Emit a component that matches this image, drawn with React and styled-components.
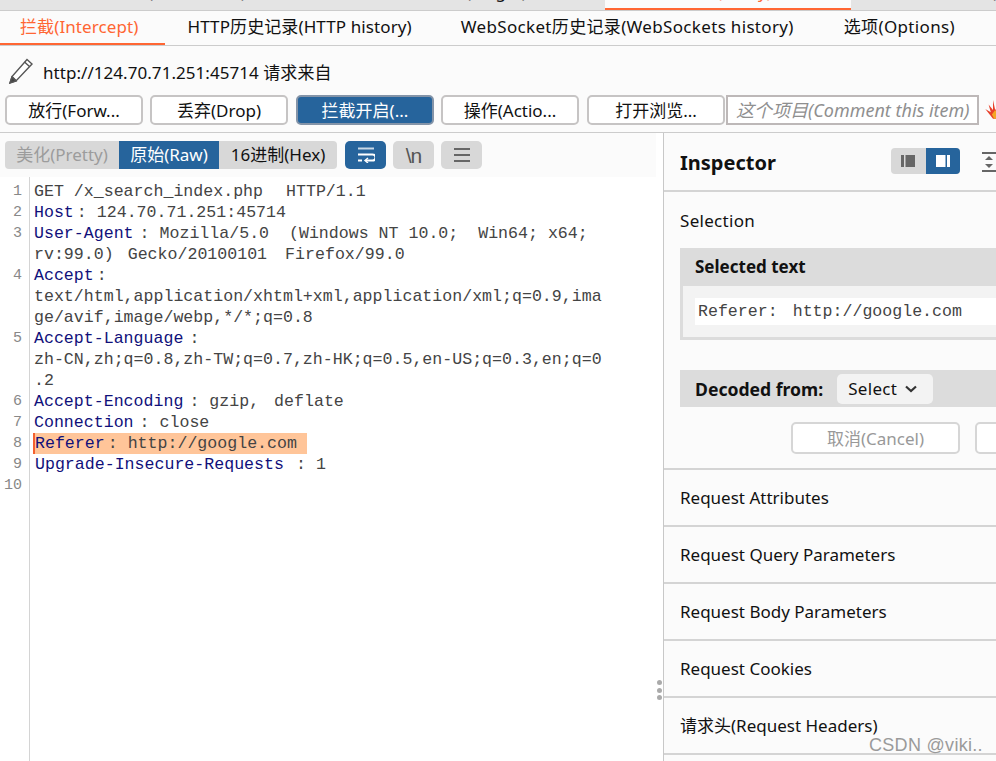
import React from 'react';
import styled, { createGlobalStyle } from 'styled-components';

const Global = createGlobalStyle`
  html, body { margin: 0; padding: 0; background: #fff; }
  body { width: 996px; height: 761px; overflow: hidden; font-family: "Noto Sans", "Noto Sans CJK SC", sans-serif; color: #111; }
  * { box-sizing: border-box; }
`;
const Page = styled.div`width:996px;height:761px;overflow:hidden;display:flex;flex-direction:column;position:relative;background:#fbfbfb;`;
const TopStrip = styled.div`display:flex;height:11px;flex:none;background:#e4e4e4;border-bottom:1px solid #ccc;overflow:hidden;`;
const TopTab = styled.div`
  flex:none;width:${p=>p.$w}px;padding-left:${p=>p.$pad}px;height:${p=>p.$active?'11px':'10px'};overflow:hidden;
  background:${p=>p.$active?'#fbfbfb':'transparent'};
  border-bottom:${p=>p.$active?'3px solid #ff6633':'none'};
  color:${p=>p.$active?'#ff6633':'#111'};font-size:17px;line-height:24px;white-space:nowrap;
  & > span{display:block;margin-top:-20px;}
`;
const SubTabs = styled.div`display:flex;height:35px;flex:none;border-bottom:1px solid #ccc;background:#fbfbfb;`;
const SubTab = styled.div`
  flex:none;height:34px;margin-bottom:-1px;padding:0 ${p=>p.$r}px 0 ${p=>p.$l}px;font-size:17px;letter-spacing:${p=>p.$ls||0.1}px;line-height:31px;white-space:nowrap;
  color:${p=>p.$active?'#ff6633':'#111'};
  border-bottom:${p=>p.$active?'2px solid #ff6633':'none'};
`;
const UrlRow = styled.div`display:flex;align-items:center;height:49px;flex:none;padding-left:7px;gap:9px;font-size:17px;letter-spacing:.05px;padding-top:1px;`;
const Actions = styled.div`display:flex;height:38px;flex:none;padding-left:5px;border-bottom:1px solid #ccc;align-items:flex-start;position:relative;`;
const ActionButton = styled.button`
  flex:none;width:138px;height:30px;margin-right:${p=>p.$mr}px;border-radius:5px;padding:0;font:17px/1 "Noto Sans","Noto Sans CJK SC",sans-serif;
  background:${p=>p.$on?'#26649c':'#fff'};color:${p=>p.$on?'#fff':'#111'};border:2px solid ${p=>p.$on?'#8494a8':'#c6c4c4'};
`;
const Comment = styled.div`
  flex:none;width:253px;height:30px;border:2px solid #bdb8b8;background:#fff;padding-left:8px;font-style:italic;color:#8f8f8f;font-size:18px;line-height:26px;white-space:nowrap;overflow:hidden;
`;
const Flame = styled.svg`flex:none;margin:4px 0 0 6px;`;
const Main = styled.div`flex:1;display:flex;min-height:0;`;
const Left = styled.div`flex:none;width:663px;background:#fff;display:flex;flex-direction:column;`;
const EditorBar = styled.div`flex:none;height:44px;width:656px;background:#fbfbfb;padding:8px 0 0 5px;display:flex;align-items:flex-start;`;
const Segment = styled.div`display:flex;height:28px;border-radius:4px;overflow:hidden;background:#d8d8d8;margin-right:8px;`;
const SegItem = styled.div`
  width:${p=>p.$w}px;text-align:center;font-size:17px;line-height:27px;white-space:nowrap;
  background:${p=>p.$on?'#26649c':'transparent'};
  color:${p=>p.$on?'#fff':p.$dim?'#9c9c9c':'#111'};
`;
const IconBtn = styled.div`
  width:41px;height:28px;border-radius:5px;margin-right:7px;display:flex;align-items:center;justify-content:center;
  background:${p=>p.$on?'#26649c':'#d8d8d8'};color:${p=>p.$on?'#fff':'#555'};font:21px/1 "Liberation Sans",sans-serif;letter-spacing:-1px;
`;
const Editor = styled.div`flex:1;padding-top:4px;position:relative;font:16.6px/21px "Liberation Mono",monospace;color:#444;
  &::before{content:"";position:absolute;left:29px;top:0;bottom:0;width:1px;background:#d4d4d4;}
`;
const Row = styled.div`display:flex;height:21px;white-space:pre;`;
const Num = styled.div`flex:none;width:22px;text-align:right;color:#888;font:15px/21px "Liberation Mono",monospace;margin-right:${p=>p.$hl?'11px':'12px'};`;
const Code = styled.div`
  height:21px;padding-left:${p=>p.$indent?'1px':'0'};
  ${p=>p.$hl?'background:#ffc599;border-left:2px solid #f4602f;padding-right:10px;':''}
`;
const Key = styled.span`color:#10107a;`;
const Colon = styled.span`margin-left:${p=>p.$m}px;`;
const Gap = styled.span`display:inline-block;width:${p=>p.$w}px;`;
const Inspector = styled.div`flex:none;width:420px;border-left:1px solid #c8c8c8;background:#fbfbfb;display:flex;flex-direction:column;`;
const InspHead = styled.div`flex:none;height:59px;border-bottom:2px solid #d4d4d4;display:flex;align-items:center;padding:2px 0 0 16px;position:relative;`;
const InspTitle = styled.div`width:211px;font-size:20px;font-weight:700;color:#111;`;
const Toggle = styled.div`display:flex;width:69px;height:26px;margin-top:-4px;border-radius:4px;overflow:hidden;background:#d8d8d8;margin-right:22px;`;
const ToggleItem = styled.div`flex:1;display:flex;align-items:center;justify-content:center;background:${p=>p.$on?'#26649c':'transparent'};`;
const SpacingIcon = styled.svg`flex:none;margin-top:-2px;`;
const Section = styled.div`flex:none;height:278px;padding:0 0 0 16px;border-bottom:2px solid #d4d4d4;`;
const SectionTitle = styled.div`height:56px;font-size:17px;letter-spacing:.3px;line-height:57px;`;
const TextCard = styled.div`background:#f3f3f3;border:3px solid #dcdcdc;border-top:0;height:92px;`;
const CardHead = styled.div`height:38px;background:#dcdcdc;font-size:17px;font-weight:700;line-height:37px;padding-left:15px;margin:0 -3px;`;
const CardBody = styled.div`padding:12px 0 0 12px;`;
const SelText = styled.div`background:#fff;height:27px;font:16.6px/28px "Liberation Mono",monospace;padding-left:3px;color:#444;white-space:pre;`;
const Decoded = styled.div`height:37px;margin-top:30px;background:#dcdcdc;display:flex;align-items:center;padding-left:15px;font-size:17.6px;font-weight:700;`;
const SelectBtn = styled.div`width:96px;height:30px;border-radius:5px;background:#f3f3f3;margin-left:14px;display:flex;align-items:center;padding-left:11px;gap:8px;font-weight:400;font-size:17px;letter-spacing:.3px;`;
const Buttons = styled.div`display:flex;padding:15px 0 0 111px;gap:15px;`;
const Cancel = styled.div`flex:none;width:169px;height:32px;border:2px solid #d6d6d6;border-radius:5px;background:#fff;text-align:center;color:#999;font-size:17px;line-height:29px;`;
const InspRow = styled.div`flex:none;height:57px;border-bottom:2px solid #d4d4d4;padding-left:16px;font-size:17px;line-height:56px;white-space:nowrap;`;
const Dots = styled.div`position:absolute;left:657px;top:680px;display:flex;flex-direction:column;gap:2.5px;`;
const Dot = styled.i`display:block;width:5px;height:5px;border-radius:50%;background:#aaa;`;
const Watermark = styled.div`position:absolute;left:869px;top:734px;font:18px/22px "Liberation Sans",sans-serif;color:#9a9a9a;white-space:nowrap;letter-spacing:.3px;`;

const Pencil = () => (
  <svg width="27" height="28" viewBox="0 0 27 28" fill="none" stroke="#555" strokeWidth="1.4">
    <path d="M20 2.5l5 4.5L9 24l-6 2 2-6.5z" fill="#fff"/>
    <path d="M17.5 5l5 4.5M5 19.5l4.5 4.5" />
    <path d="M3 26l2-6 4 4z" fill="#444"/>
  </svg>
);
const lines = [
  [1, <>GET /x_search_index.php<Gap $w={23}/>HTTP/1.1</>],
  [2, <><Key>Host</Key><Colon $m={3}>:</Colon> 124.70.71.251:45714</>],
  [3, <><Key>User-Agent</Key><Colon $m={6}>:</Colon> Mozilla/5.0  (Windows NT 10.0;  Win64; x64;</>],
  ['', <>rv:99.0)<Gap $w={14}/>Gecko/20100101<Gap $w={18}/>Firefox/99.0</>],
  [4, <><Key>Accept</Key><Colon $m={3}>:</Colon></>],
  ['', 'text/html,application/xhtml+xml,application/xml;q=0.9,ima'],
  ['', 'ge/avif,image/webp,*/*;q=0.8'],
  [5, <><Key>Accept-Language</Key><Colon $m={6}>:</Colon></>],
  ['', 'zh-CN,zh;q=0.8,zh-TW;q=0.7,zh-HK;q=0.5,en-US;q=0.3,en;q=0'],
  ['', '.2'],
  [6, <><Key>Accept-Encoding</Key><Colon $m={6}>:</Colon> gzip,<Gap $w={15}/>deflate</>],
  [7, <><Key>Connection</Key><Colon $m={6}>:</Colon> close</>],
  [8, <><Key>Referer</Key><Colon $m={3}>:</Colon> http://google.com</>, true],
  [9, <><Key>Upgrade-Insecure-Requests</Key><Colon $m={12}>:</Colon> 1</>, false, true],
  [10, ''],
];
const rows = ['Request Attributes','Request Query Parameters','Request Body Parameters','Request Cookies','请求头(Request Headers)'];

export default function App() {
  return (
    <Page>
      <Global />
      <TopStrip>
        <TopTab $w={340} $pad={97}><span>仪表盘(Dashboard)</span></TopTab>
        <TopTab $w={265} $pad={92}><span>目标(Target)</span></TopTab>
        <TopTab $w={246} $pad={78} $active><span>代理(Proxy)</span></TopTab>
        <TopTab $w={145} $pad={89}><span>重放器(Repeater)</span></TopTab>
      </TopStrip>
      <SubTabs>
        <SubTab $active $l={20} $r={26}>拦截(Intercept)</SubTab>
        <SubTab $l={23} $r={24}>HTTP历史记录(HTTP history)</SubTab>
        <SubTab $l={25} $r={24} $ls={0.33}>WebSocket历史记录(WebSockets history)</SubTab>
        <SubTab $l={26} $r={24} $ls={0.35}>选项(Options)</SubTab>
      </SubTabs>
      <UrlRow><Pencil /><span>http://124.70.71.251:45714 请求来自</span></UrlRow>
      <Actions>
        <ActionButton $mr={7}>放行(Forw...</ActionButton>
        <ActionButton $mr={8}>丢弃(Drop)</ActionButton>
        <ActionButton $mr={7} $on>拦截开启(...</ActionButton>
        <ActionButton $mr={8}>操作(Actio...</ActionButton>
        <ActionButton $mr={1}>打开浏览...</ActionButton>
        <Comment>这个项目(Comment this item)</Comment>
        <Flame width="16" height="22" viewBox="0 0 14 20">
          <path d="M0 9l5 3-2-7 4 5 0-9 2 9 3-5v13H7z" fill="#e8402a"/>
          <path d="M6 14l3-4 2 3 2-2v7H8z" fill="#f5a623"/>
        </Flame>
      </Actions>
      <Main>
        <Left>
          <EditorBar>
            <Segment>
              <SegItem $w={114} $dim>美化(Pretty)</SegItem>
              <SegItem $w={100} $on>原始(Raw)</SegItem>
              <SegItem $w={118}>16进制(Hex)</SegItem>
            </Segment>
            <IconBtn $on>
              <svg width="18" height="16" viewBox="0 0 18 16" fill="none" stroke="#fff">
                <path d="M1 1.5h16" strokeWidth="2" opacity=".75"/>
                <path d="M1 7.5h14.5a2.5 2.5 0 0 1 0 6H9" strokeWidth="2"/>
                <path d="M11 11l-3 2.5 3 2.5" strokeWidth="1.4"/>
                <path d="M1 13.5h4" strokeWidth="2"/>
              </svg>
            </IconBtn>
            <IconBtn>\n</IconBtn>
            <IconBtn>
              <svg width="18" height="16" viewBox="0 0 18 16" fill="none" stroke="#666" strokeWidth="2">
                <path d="M1 2h16M1 8h16M1 14h16"/>
              </svg>
            </IconBtn>
          </EditorBar>
          <Editor>
            {lines.map(([n, c, hl, indent], i) => (
              <Row key={i}>
                <Num $hl={hl}>{n}</Num>
                <Code $hl={hl} $indent={indent}>{c}</Code>
              </Row>
            ))}
          </Editor>
        </Left>
        <Inspector>
          <InspHead>
            <InspTitle>Inspector</InspTitle>
            <Toggle>
              <ToggleItem>
                <svg width="14" height="12" viewBox="0 0 14 12"><path d="M0 0h3v12H0zM4.500 0H14v12H4.500z" fill="#666"/></svg>
              </ToggleItem>
              <ToggleItem $on>
                <svg width="14" height="12" viewBox="0 0 14 12"><path d="M0 0h9.500v12H0zM11 0h3v12h-3z" fill="#fff"/></svg>
              </ToggleItem>
            </Toggle>
            <SpacingIcon width="14" height="20" viewBox="0 0 14 20" fill="#666"><path d="M0 0h14v2H0zM0 18h14v2H0zM7 4l4 4H3zM7 16l-4-4h8z"/></SpacingIcon>
          </InspHead>
          <Section>
            <SectionTitle>Selection</SectionTitle>
            <TextCard>
              <CardHead>Selected text</CardHead>
              <CardBody><SelText>Referer:<Gap $w={15}/>http://google.com</SelText></CardBody>
            </TextCard>
            <Decoded>Decoded from:
              <SelectBtn>Select
                <svg width="12" height="8" viewBox="0 0 12 8" fill="none" stroke="#333" strokeWidth="2.200"><path d="M1 1.500l5 4.500 5-4.500"/></svg>
              </SelectBtn>
            </Decoded>
            <Buttons><Cancel>取消(Cancel)</Cancel><Cancel /></Buttons>
          </Section>
          {rows.map(r => <InspRow key={r}>{r}</InspRow>)}
        </Inspector>
      </Main>
      <Dots><Dot /><Dot /><Dot /></Dots>
      <Watermark>CSDN @viki..</Watermark>
    </Page>
  );
}
